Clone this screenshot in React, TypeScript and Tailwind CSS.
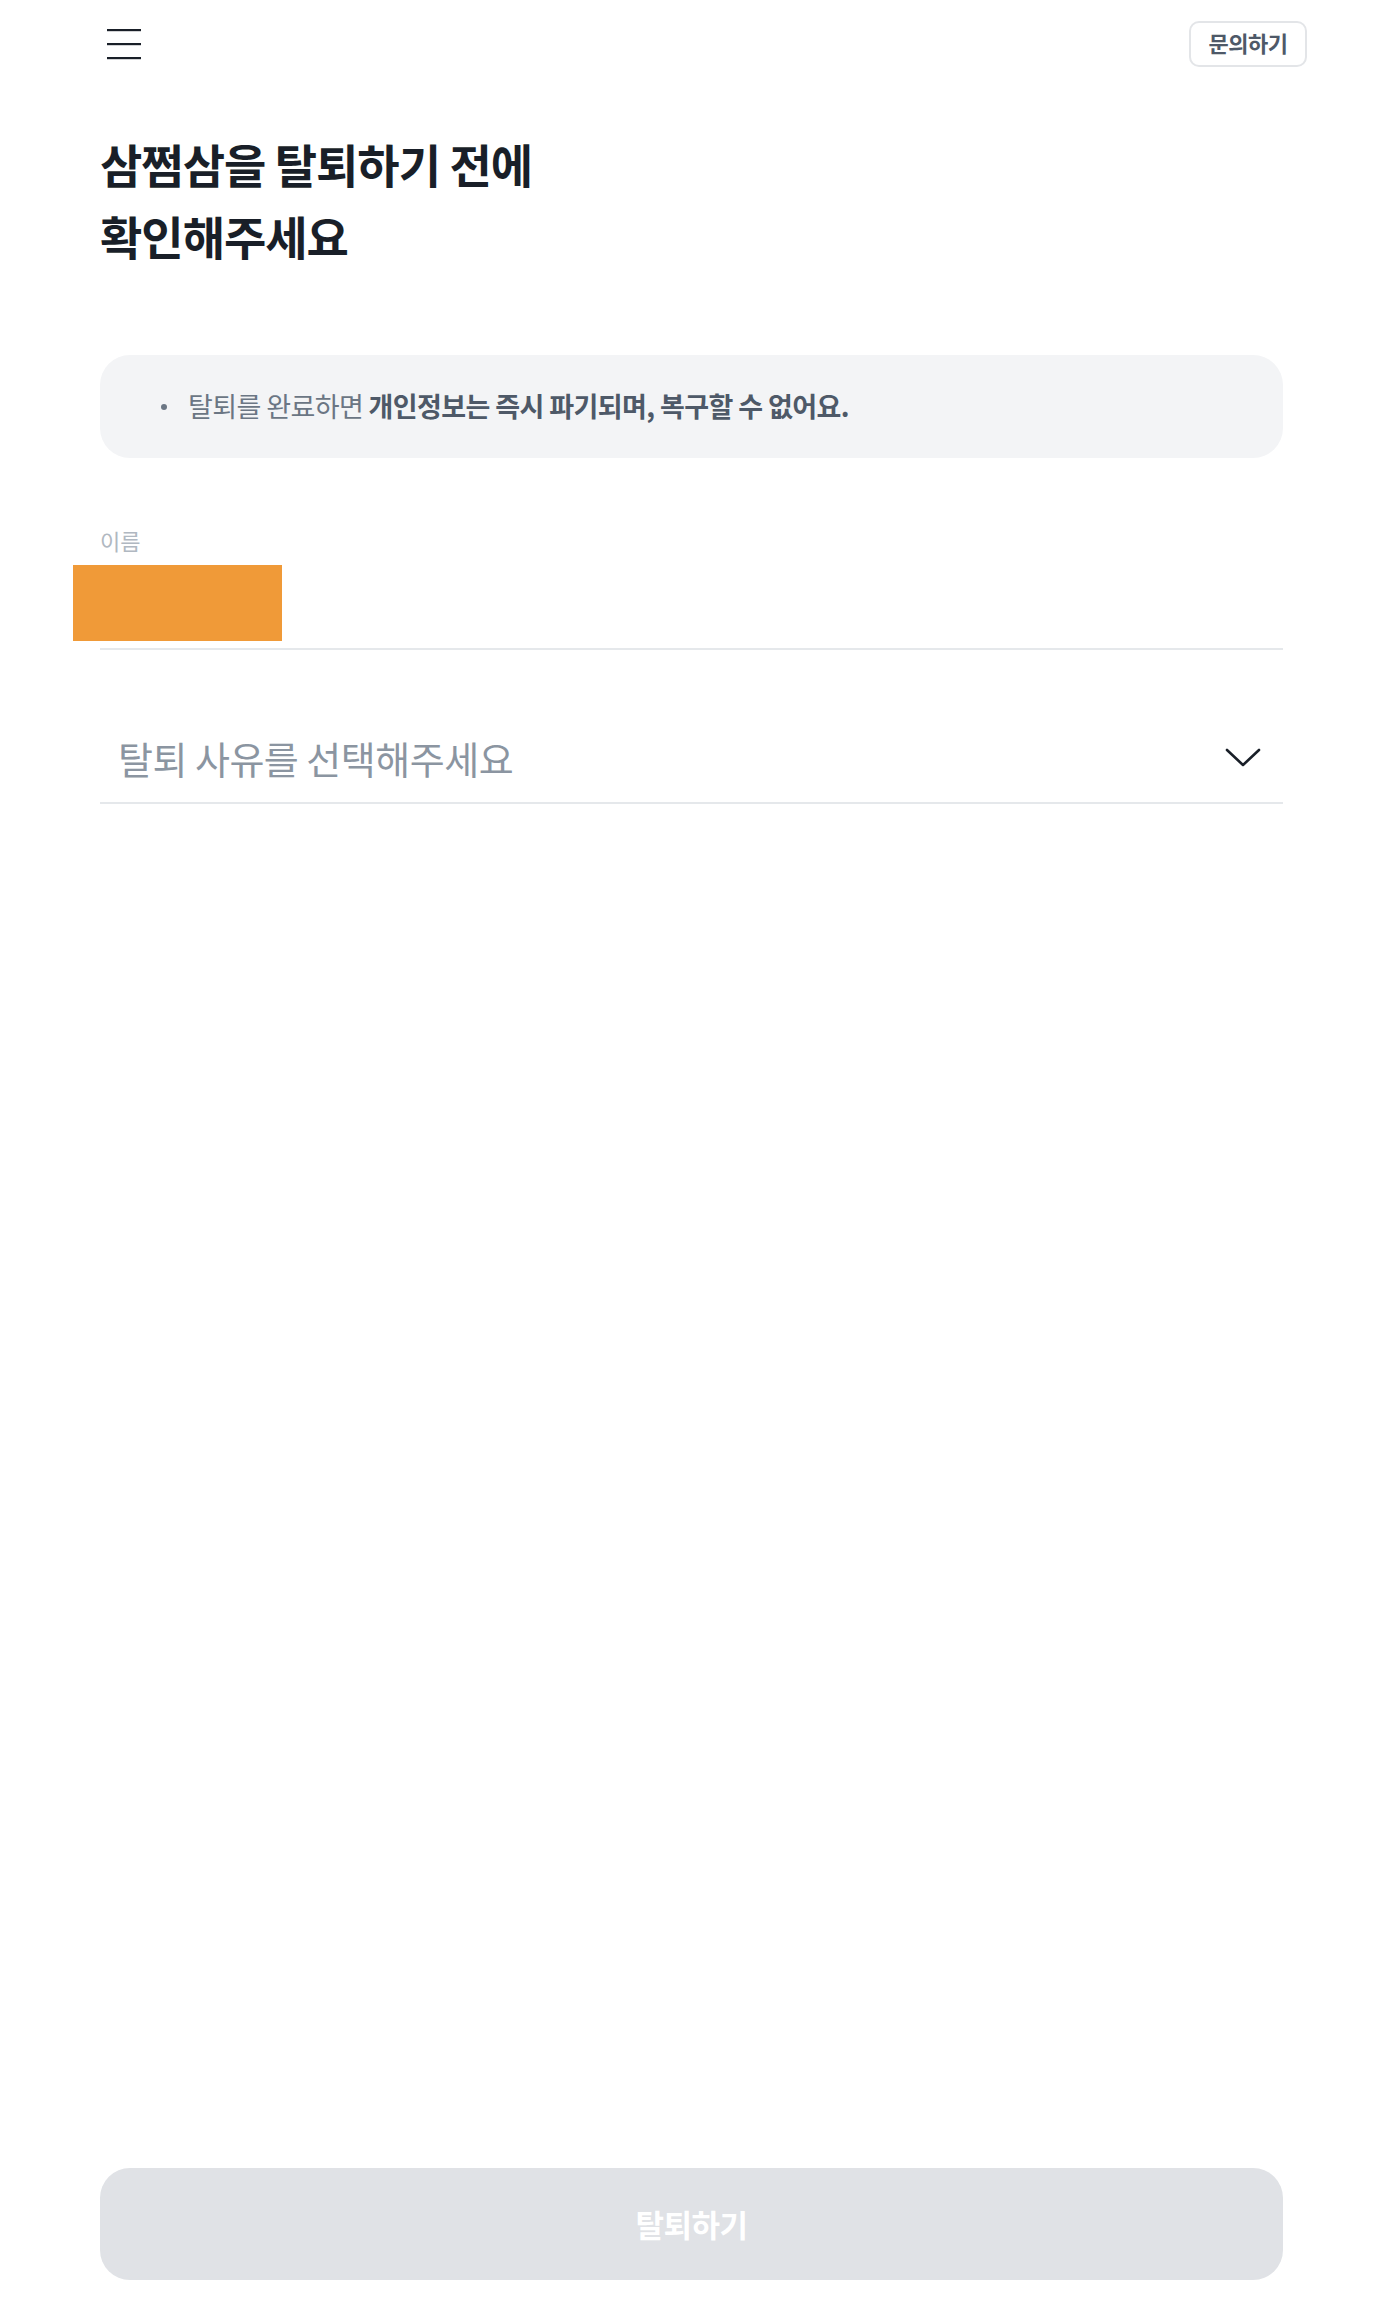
import React from "react";

export default function App() {
  const font = { fontFamily: '"Noto Sans CJK KR", "Noto Sans", sans-serif' };
  return (
    <div style={font} className="min-h-[2308px] bg-white flex flex-col">
      <header className="flex items-center justify-between pl-[100px] pr-[79px] pt-[20px]">
        <button className="w-[48px] h-[48px] flex items-center justify-center">
          <svg width="34" height="32" viewBox="0 0 34 32">
            <rect x="0" y="1" width="34" height="2.2" fill="#191f28" />
            <rect x="0" y="15" width="34" height="2.2" fill="#191f28" />
            <rect x="0" y="29" width="34" height="2.2" fill="#191f28" />
          </svg>
        </button>
        <button className="h-[46px] w-[118px] rounded-[10px] border-2 border-[#e3e5e8] text-[22px] leading-none font-semibold text-[#4e5968] flex items-center justify-center pb-[4px] tracking-[-0.5px]">
          문의하기
        </button>
      </header>

      <main className="px-[100px] pr-[103px] flex flex-col flex-1">
        <h1 className="mt-[59px] text-[46px] leading-[72px] font-bold text-[#191f28] tracking-[-1px]">
          삼쩜삼을 탈퇴하기 전에
          <br />
          확인해주세요
        </h1>

        <div className="mt-[84px] h-[103px] rounded-[30px] bg-[#f3f4f6] flex items-center pl-[61px]">
          <span className="w-[6px] h-[6px] rounded-full bg-[#6b7684] mr-[21px]" />
          <p className="text-[27px] text-[#6b7684] tracking-[-0.6px]">
            탈퇴를 완료하면{" "}
            <span className="font-bold text-[#4e5968]">
              개인정보는 즉시 파기되며, 복구할 수 없어요.
            </span>
          </p>
        </div>

        <label className="mt-[68px] text-[22px] leading-[28px] text-[#b0b8c1]">
          이름
        </label>
        <div className="relative h-[96px] border-b-2 border-[#e5e8eb]">
          <div className="absolute left-[-27px] top-[11px] w-[209px] h-[76px] bg-[#f09a38]" />
        </div>

        <div className="mt-[71px] h-[83px] border-b-2 border-[#e5e8eb] flex items-center justify-between pl-[18px] pr-[22px] pb-[8px]">
          <span className="text-[38px] text-[#8b95a1] tracking-[-0.5px]">
            탈퇴 사유를 선택해주세요
          </span>
          <svg width="36" height="20" viewBox="0 0 36 20">
            <path
              d="M2 2 L18 17 L34 2"
              fill="none"
              stroke="#191f28"
              strokeWidth="2.6"
              strokeLinecap="round"
              strokeLinejoin="round"
            />
          </svg>
        </div>

        <div className="mt-auto pb-[28px]">
          <button className="w-full h-[112px] rounded-[30px] bg-[#e0e2e6] text-white text-[31px] font-bold tracking-[-0.5px]">
            탈퇴하기
          </button>
        </div>
      </main>
    </div>
  );
}
